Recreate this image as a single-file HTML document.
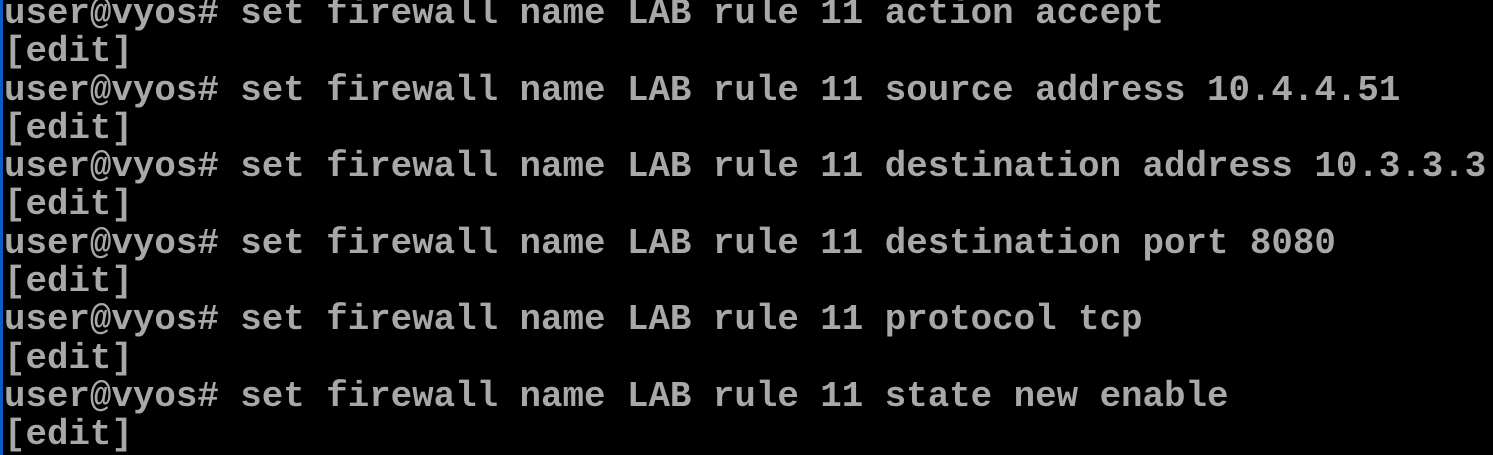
<!DOCTYPE html>
<html><head><meta charset="utf-8"><style>
html,body{margin:0;padding:0;background:#000;width:1493px;height:455px;overflow:hidden;}
.bar{position:absolute;left:0;top:0;width:3px;height:455px;background:#0a5cc8;}
pre{position:absolute;left:4px;top:-5px;margin:0;font-family:"Liberation Mono",monospace;font-size:35.8px;line-height:38.3px;color:#a8a8a8;font-weight:bold;white-space:pre;}
</style></head><body>
<div class="bar"></div>
<pre>user@vyos# set firewall name LAB rule 11 action accept
[edit]
user@vyos# set firewall name LAB rule 11 source address 10.4.4.51
[edit]
user@vyos# set firewall name LAB rule 11 destination address 10.3.3.3
[edit]
user@vyos# set firewall name LAB rule 11 destination port 8080
[edit]
user@vyos# set firewall name LAB rule 11 protocol tcp
[edit]
user@vyos# set firewall name LAB rule 11 state new enable
[edit]</pre>
</body></html>
